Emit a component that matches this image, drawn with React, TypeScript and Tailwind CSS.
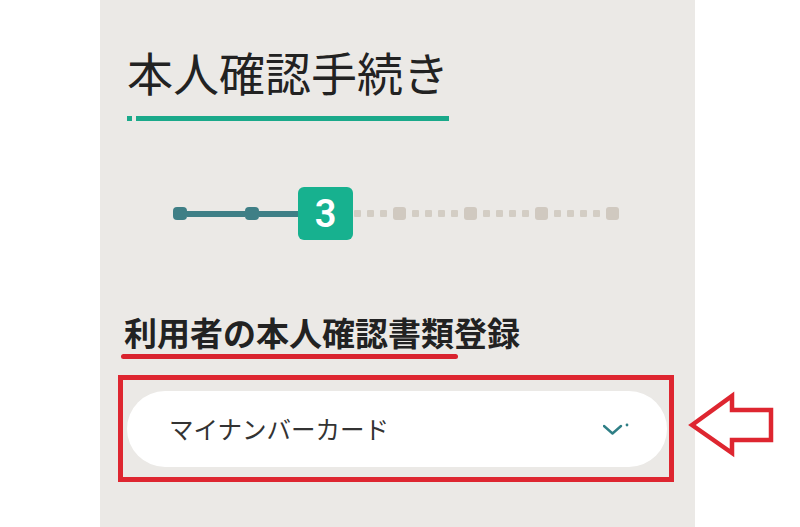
import * as React from "react";

const FONT = "font-['Noto_Sans_CJK_JP','Noto_Sans',sans-serif]";

// 3 = current step; after it come the gray steps: [small dots..., big dot]
const GRAY_STEPS = [3, 4, 4, 4];

function Stepper() {
  return (
    <div className="ml-[46px] flex items-center">
      <span className="h-[13px] w-[14px] rounded-[4px] bg-[#3f7f86]" />
      <span className="h-[6px] w-[58px] bg-[#3f7f86]" />
      <span className="h-[13px] w-[14px] rounded-[4px] bg-[#3f7f86]" />
      <span className="h-[6px] w-[39px] bg-[#3f7f86]" />
      <div className="flex h-[53px] w-[55px] items-center justify-center rounded-[6px] bg-[#17b18f]">
        <span className="font-['Roboto','Noto_Sans',sans-serif] text-[38px] font-semibold leading-none text-white">3</span>
      </div>
      <div className="ml-[1px] flex items-center gap-[6px]">
        {GRAY_STEPS.map((n, i) => (
          <React.Fragment key={i}>
            {Array.from({ length: n }).map((_, j) => (
              <span key={j} className="h-[7px] w-[7px] rounded-[1px] bg-[#d3cdc4]" />
            ))}
            <span className="h-[13px] w-[13px] rounded-[3px] bg-[#d0c9c0]" />
          </React.Fragment>
        ))}
      </div>
    </div>
  );
}

function ArrowLeft() {
  return (
    <svg
      className="absolute left-[684px] top-[388px]"
      width="96"
      height="72"
      viewBox="684 388 96 72"
      fill="none"
    >
      <path
        d="M692 425 L732 396 L732 410 L771 410 L771 440 L732 440 L732 453 Z"
        stroke="#de2630"
        strokeWidth="4.5"
        strokeLinejoin="miter"
      />
    </svg>
  );
}

export default function App() {
  return (
    <div className={`relative h-[527px] w-[800px] overflow-hidden bg-white ${FONT}`}>
      <div className="ml-[100px] h-full w-[595px] bg-[#ebe9e6] pl-[27px] pt-[48px]">
        <h1 className="text-[46px] font-normal leading-[46px] text-[#222]">本人確認手続き</h1>
        <div className="mt-[22px] flex items-center">
          <span className="h-[5px] w-[5px] bg-[#1aa98a]" />
          <span className="ml-[4px] h-[5px] w-[313px] bg-[#1aa98a]" />
        </div>

        <div className="mt-[66px]">
          <Stepper />
        </div>

        <h2 className="ml-[-3px] mt-[76px] text-[33px] font-bold leading-[33px] text-[#222]">
          利用者の本人確認書類登録
        </h2>
        <div className="ml-[-6px] mt-[5px] h-[5px] w-[337px] rounded-full bg-[#d9232e]" />

        <div className="ml-[-9px] mt-[16px] w-[556px] border-[5px] border-[#de2630] pb-[10px] pl-[4px] pr-[2px] pt-[11px]">
          <button className="flex h-[76px] w-[540px] items-center justify-between rounded-full bg-white pl-[42px] pr-[38px]">
            <span className="text-[24.5px] leading-none text-[#333]">マイナンバーカード</span>
            <svg width="26" height="16" viewBox="0 0 26 16" fill="none">
              <path d="M1 5 L9.5 12.5 L18 5" stroke="#2f7f86" strokeWidth="2.4" strokeLinecap="round" strokeLinejoin="round" />
              <circle cx="24" cy="4" r="1.4" fill="#2f7f86" />
            </svg>
          </button>
        </div>
      </div>
      <ArrowLeft />
    </div>
  );
}
